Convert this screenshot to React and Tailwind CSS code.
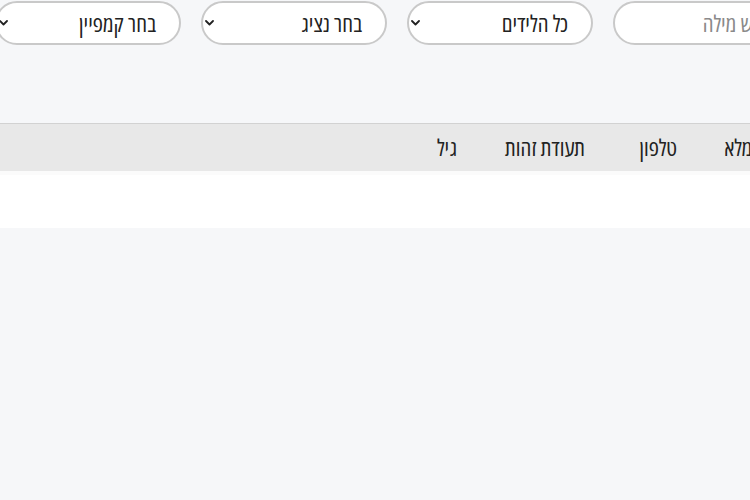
const Chevron = () => (
  <svg width="9" height="6" viewBox="0 0 9 6" fill="none" className="shrink-0">
    <path d="M1 1l3.5 3.5L8 1" stroke="#222" strokeWidth="1.8" strokeLinecap="round" strokeLinejoin="round" />
  </svg>
);

function Dropdown({ label }) {
  return (
    <button className="w-[186px] h-[44px] shrink-0 rounded-full border-2 border-[#c9c9c9] bg-white flex items-center justify-between pr-[23px] pl-[2px] text-[#222]">
      <span>{label}</span>
      <Chevron />
    </button>
  );
}

const columns = [
  { label: 'שם מלא', className: 'w-[98px] pr-[19px]' },
  { label: 'טלפון', className: 'w-[92px] pr-[24px]' },
  { label: 'תעודת זהות', className: 'w-[128px] pr-[24px]' },
  { label: 'גיל', className: 'flex-1 pr-[24px]' },
];

export default function App() {
  return (
    <div
      dir="rtl"
      className="w-[750px] h-[500px] overflow-hidden bg-[#f6f7f9] text-[23px] font-stretch-condensed"
      style={{ fontFamily: '"Open Sans", "Noto Sans", sans-serif' }}
    >
      <div className="mr-[-49px] pt-[1px]">
        {/* Filters */}
        <div className="flex gap-5">
          <input
            placeholder="חפש מילה"
            className="w-[186px] h-[44px] shrink-0 rounded-full border-2 border-[#c9c9c9] bg-white pr-[23px] pl-3 outline-none placeholder:text-[#8a8a8a]"
          />
          <Dropdown label="כל הלידים" />
          <Dropdown label="בחר נציג" />
          <Dropdown label="בחר קמפיין" />
        </div>

        {/* Table */}
        <div className="mt-[78px] w-[1000px]">
          <div className="flex h-[48px] border-t border-[#d2d2d2] bg-[#e8e8e8] text-[#222]">
            {columns.map((c) => (
              <div key={c.label} className={`${c.className} shrink-0 flex items-center`}>
                {c.label}
              </div>
            ))}
          </div>
          <div className="h-[57px] bg-white border-t-4 border-[#fbfbfb]" />
        </div>
      </div>
    </div>
  );
}
